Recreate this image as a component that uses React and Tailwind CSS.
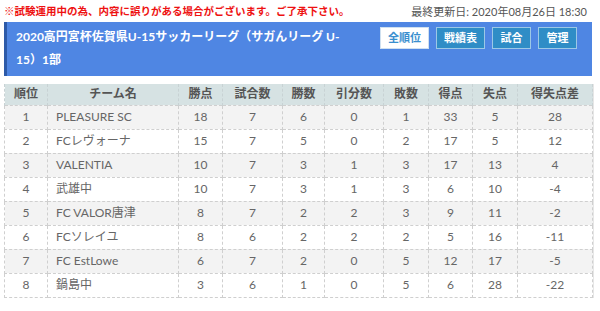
const rows = [
  [1, 'PLEASURE SC', 18, 7, 6, 0, 1, 33, 5, 28],
  [2, 'FCレヴォーナ', 15, 7, 5, 0, 2, 17, 5, 12],
  [3, 'VALENTIA', 10, 7, 3, 1, 3, 17, 13, 4],
  [4, '武雄中', 10, 7, 3, 1, 3, 6, 10, -4],
  [5, 'FC VALOR唐津', 8, 7, 2, 2, 3, 9, 11, -2],
  [6, 'FCソレイユ', 8, 6, 2, 2, 2, 5, 16, -11],
  [7, 'FC EstLowe', 6, 7, 2, 0, 5, 12, 17, -5],
  [8, '鍋島中', 3, 6, 1, 0, 5, 6, 28, -22],
];

const heads = ['順位', 'チーム名', '勝点', '試合数', '勝数', '引分数', '敗数', '得点', '失点', '得失点差'];
const widths = ['w-[43px]', 'w-[131px]', 'w-[44px]', 'w-[60px]', 'w-[42px]', 'w-[59px]', 'w-[45px]', 'w-[44px]', 'w-[45px]', 'w-[75px]'];

export default function App() {
  return (
    <div className="w-[600px] h-[311px] bg-white overflow-hidden font-['Lato','Noto_Sans_CJK_JP',sans-serif]">
      {/* お知らせ + 更新日 */}
      <div className="flex items-center justify-between pl-[4px] pr-[13px] h-[22px] leading-none">
        <span className="text-[#ee1111] font-bold text-[10.5px]">※試験運用中の為、内容に誤りがある場合がございます。ご了承下さい。</span>
        <span className="text-[#555] text-[11px]">最終更新日: 2020年08月26日 18:30</span>
      </div>

      {/* タイトルバー */}
      <div className="mx-[4px] w-[588px] h-[54px] bg-[#4f86e3] border-l-[3px] border-[#2d5aa8] flex justify-between pl-[9px] pr-[15px]">
        <div className="text-white font-bold text-[12px] leading-[23px] pt-[3px]">
          2020高円宮杯佐賀県U-15サッカーリーグ（サガんリーグ U-
          <br />
          15）1部
        </div>
        <div className="flex gap-[7px] pt-[5px] text-[11px] font-bold">
          <span className="h-[22px] w-[49px] flex items-center justify-center bg-white text-[#3a8fcf] border border-[#cfe0f0]">全順位</span>
          <span className="h-[22px] w-[49px] flex items-center justify-center bg-[#2f8dc6] text-white border border-[#9cc8e6]">戦績表</span>
          <span className="h-[22px] w-[39px] flex items-center justify-center bg-[#2f8dc6] text-white border border-[#9cc8e6]">試合</span>
          <span className="h-[22px] w-[39px] flex items-center justify-center bg-[#2f8dc6] text-white border border-[#9cc8e6]">管理</span>
        </div>
      </div>

      {/* 順位表 */}
      <div className="mt-[8px] mx-[4px] w-[590px] border-r-[2px] border-[#e6e6e6]">
        <table className="w-[588px] table-fixed border-collapse text-[12px]">
          <thead>
            <tr className="h-[21px] bg-[#d6e2e3]">
              {heads.map((h, i) => (
                <th key={h} className={`${widths[i]} font-bold text-[#555] text-center border-x border-dashed border-[#c8d2d4] p-0`}>
                  {h}
                </th>
              ))}
            </tr>
          </thead>
          <tbody>
            {rows.map((r, ri) => (
              <tr key={r[0]} className={ri % 2 === 0 ? 'h-[24px] bg-[#f3f3f3]' : 'h-[24px] bg-white'}>
                {r.map((c, ci) => (
                  <td
                    key={ci}
                    className={
                      ci === 1
                        ? 'text-left pl-[8px] text-[#666] border border-dashed border-[#cfcfcf] p-0'
                        : 'text-center text-[#666] border border-dashed border-[#cfcfcf] p-0'
                    }
                  >
                    {c}
                  </td>
                ))}
              </tr>
            ))}
          </tbody>
        </table>
      </div>
    </div>
  );
}
